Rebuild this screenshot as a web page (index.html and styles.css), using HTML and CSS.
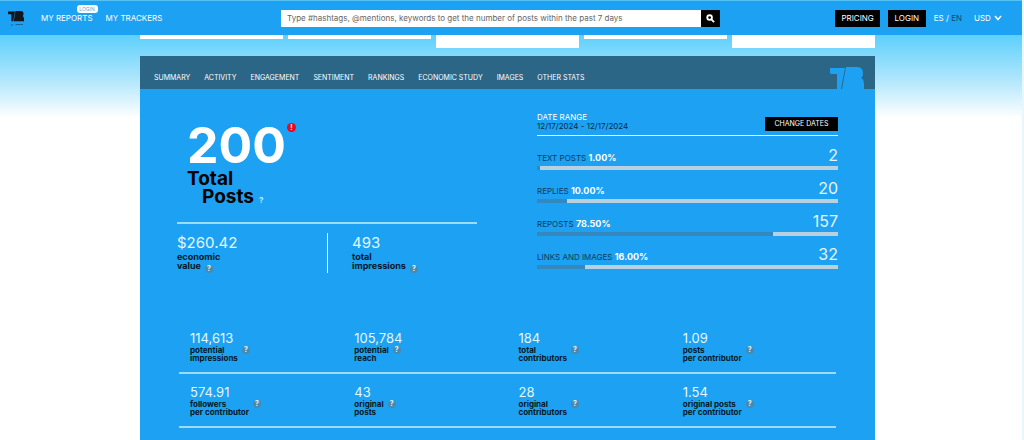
FILE: index.html
```html
<!DOCTYPE html>
<html lang="en">
<head>
<meta charset="utf-8">
<meta name="viewport" content="width=device-width, initial-scale=1">
<title>Report summary</title>
<link rel="stylesheet" href="styles.css">
</head>
<body>
<svg class="defs" aria-hidden="true">
  <symbol id="tb" viewBox="0 0 34 22">
    <path d="M0 1H15L11 22H7V7H1Q0 7 0 5ZM16 0H27Q33 0 33 6Q33 10 31 11Q34 12 34 17Q34 22 34 22H12Z"/>
  </symbol>
</svg>
<header class="topbar">
  <a class="logo" href="#" aria-label="Home"><svg viewBox="0 0 34 34"><use href="#tb" width="34" height="26"/><path d="M16 30H32V32H16ZM6 31H11V33H6Z" opacity=".4"/></svg></a>
  <nav class="main-nav">
    <a class="reports" href="#">MY REPORTS<span class="tag">LOGIN</span></a>
    <a href="#">MY TRACKERS</a>
  </nav>
  <form class="search">
    <input type="text" aria-label="Search posts" placeholder="Type #hashtags, @mentions, keywords to get the number of posts within the past 7 days">
    <button type="button" aria-label="Search"><svg viewBox="0 0 10 10"><circle cx="4" cy="4" r="2.6"/><path d="M6 6L9 9"/></svg></button>
  </form>
  <div class="account">
    <button type="button">PRICING</button>
    <button type="button">LOGIN</button>
    <div class="lang"><a href="#">ES</a> / <a class="current" href="#">EN</a></div>
    <div class="currency">
      <select aria-label="Currency"><option>USD</option></select>
      <svg viewBox="0 0 8 6"><path d="M1 1L4 4.500L7 1"/></svg>
    </div>
  </div>
</header>
<main class="page">
  <div class="cards"><div></div><div></div><div class="tall"></div><div></div><div class="tall"></div></div>
  <section class="report">
    <nav class="tabs">
      <a href="#">SUMMARY</a><a href="#">ACTIVITY</a><a href="#">ENGAGEMENT</a><a href="#">SENTIMENT</a><a href="#">RANKINGS</a><a href="#">ECONOMIC STUDY</a><a href="#">IMAGES</a><a href="#">OTHER STATS</a>
      <svg class="mark" aria-hidden="true"><use href="#tb"/></svg>
    </nav>
    <div class="overview">
      <div class="left">
        <div class="total">
          <div class="count">200<span class="alert">!</span></div>
          <h1>Total<span class="second">Posts<button type="button" class="hint" aria-label="About total posts">?</button></span></h1>
        </div>
        <div class="pair">
          <div class="metric"><div class="value">$260.42</div><div class="name">economic<br>value <button type="button" class="help" aria-label="About economic value">?</button></div></div>
          <div class="metric split"><div class="value">493</div><div class="name">total<br>impressions <button type="button" class="help" aria-label="About total impressions">?</button></div></div>
        </div>
      </div>
      <div class="right">
        <div class="range">
          <div><div class="range-title">DATE RANGE</div><div class="dates">12/17/2024 - 12/17/2024</div></div>
          <button type="button">CHANGE DATES</button>
        </div>
        <div class="shares">
          <div class="share"><div class="row"><span>TEXT POSTS <b>1.00%</b></span><strong>2</strong></div><div class="bar"><div style="width:1%"></div></div></div>
          <div class="share"><div class="row"><span>REPLIES <b>10.00%</b></span><strong>20</strong></div><div class="bar"><div style="width:10%"></div></div></div>
          <div class="share"><div class="row"><span>REPOSTS <b>78.50%</b></span><strong>157</strong></div><div class="bar"><div style="width:78.5%"></div></div></div>
          <div class="share"><div class="row"><span>LINKS AND IMAGES <b>16.00%</b></span><strong>32</strong></div><div class="bar"><div style="width:16%"></div></div></div>
        </div>
      </div>
    </div>
    <div class="stats">
      <div class="stat-row">
        <div><div class="num">114,613</div><div class="label"><span>potential<br>impressions</span><button type="button" class="help" aria-label="About potential impressions">?</button></div></div>
        <div><div class="num">105,784</div><div class="label"><span>potential<br>reach</span><button type="button" class="help" aria-label="About potential reach">?</button></div></div>
        <div><div class="num">184</div><div class="label"><span>total<br>contributors</span><button type="button" class="help" aria-label="About total contributors">?</button></div></div>
        <div><div class="num">1.09</div><div class="label"><span>posts<br>per contributor</span><button type="button" class="help" aria-label="About posts per contributor">?</button></div></div>
      </div>
      <div class="stat-row">
        <div><div class="num">574.91</div><div class="label"><span>followers<br>per contributor</span><button type="button" class="help" aria-label="About followers per contributor">?</button></div></div>
        <div><div class="num">43</div><div class="label"><span>original<br>posts</span><button type="button" class="help" aria-label="About original posts">?</button></div></div>
        <div><div class="num">28</div><div class="label"><span>original<br>contributors</span><button type="button" class="help" aria-label="About original contributors">?</button></div></div>
        <div><div class="num">1.54</div><div class="label"><span>original posts<br>per contributor</span><button type="button" class="help" aria-label="About original posts per contributor">?</button></div></div>
      </div>
    </div>
  </section>
</main>
</body>
</html>
```
FILE: styles.css
```css
* { box-sizing: border-box; }
body {
  margin: 0;
  font-family: Inter, "Liberation Sans", sans-serif;
  font-size: 8px;
  line-height: 10px;
  color: #fff;
  background: #fff linear-gradient(#54c9fb 0, #5fd0fb 36px, #a9e4fc 76px, #fff 118px) no-repeat;
  border-right: 2px solid #e8f6fd;
}
a { color: inherit; text-decoration: none; }
button, input, select { font: inherit; color: inherit; border: 0; border-radius: 0; margin: 0; padding: 0; }
button { background: #000; cursor: pointer; }
svg { display: block; }
.defs { position: absolute; width: 0; height: 0; }

.topbar {
  display: flex;
  align-items: center;
  height: 35px;
  padding: 0 20px 0 8px;
  background: #1da1f2;
  border-top: 1px solid #54c3f3;
}
.logo { width: 16px; margin-right: 17px; fill: #10171d; }
.main-nav { display: flex; gap: 13px; width: 240px; }
.reports { position: relative; }
.tag {
  position: absolute;
  right: -5px;
  top: -8px;
  width: 21px;
  border-radius: 3px;
  background: #fff;
  color: #6b9fc0;
  font-size: 5px;
  line-height: 8px;
  text-align: center;
}
.search { display: flex; flex: 1; height: 17px; }
.search input { flex: 1; min-width: 0; padding: 0 6px; background: #fff; color: #555; }
.search input::placeholder { color: #666; opacity: 1; }
.search button { width: 19px; padding: 4px 5px; }
.search svg { width: 9px; fill: none; stroke: #fff; stroke-width: 2; }
.account { display: flex; align-items: center; margin-left: 115px; }
.account button { height: 17px; padding: 0 6px; margin-right: 8px; min-width: 38px; }
.lang { margin-right: 12px; }
.current { color: #16486b; }
.currency { display: flex; align-items: center; gap: 3px; }
.currency select { appearance: none; background: none; }
.currency svg { width: 8px; fill: none; stroke: #fff; stroke-width: 1.5; }

.page { margin: 0 147px 0 140px; }
.cards { display: grid; grid-template-columns: repeat(5, 1fr); gap: 5px; height: 21px; align-items: start; }
.cards div { height: 4px; background: #fff; }
.cards .tall { height: 13px; }
.report { background: #1da1f2; min-height: 384px; }
.tabs { display: flex; gap: 14px; height: 33px; padding: 16px 11px 0 14px; font-size: 7px; background: #2c6686; }
.tabs a { padding-top: 1px; }
.mark { width: 34px; height: 22px; margin: -5px 0 0 auto; fill: #1da1f2; }

.overview { display: grid; grid-template-columns: 300fr 301fr; gap: 60px; padding: 22px 37px 0; }
.total { padding: 10px 0 0 10px; height: 111px; }
.count { position: relative; width: fit-content; font-size: 50px; line-height: 49px; font-weight: 700; }
.alert {
  position: absolute;
  top: 2px;
  right: -10px;
  width: 9px;
  height: 9px;
  border-radius: 50%;
  background: #e30b20;
  font-size: 7px;
  line-height: 9px;
  text-align: center;
}
h1 { margin: 0; font-size: 19px; line-height: 18px; font-weight: 700; color: #000; }
.second { display: block; padding-left: 15px; }
.hint { margin-left: 5px; background: none; color: #c4ecff; font-size: 8px; line-height: 8px; }
.pair { display: grid; grid-template-columns: 1fr 1fr; border-top: 2px solid #9edcff; padding-top: 9px; }
.metric { height: 40px; }
.split { border-left: 1px solid #fff; padding-left: 24px; }
.value { font-size: 15px; line-height: 19px; color: #e4f7ff; }
.name { font-size: 9px; line-height: 9px; font-weight: 700; color: #001626; }
.help {
  width: 8px;
  height: 8px;
  border-radius: 50%;
  background: #4b89ad;
  color: #e8f7ff;
  font-size: 7px;
  line-height: 8px;
  font-weight: 700;
  text-align: center;
}
.name .help { margin-left: 2px; vertical-align: -2px; }

.range { display: flex; justify-content: space-between; align-items: flex-end; height: 25px; padding-bottom: 4px; border-bottom: 1px solid #fff; }
.range-title { line-height: 10px; }
.dates { line-height: 9px; color: #082c48; }
.range button { width: 73px; height: 14px; font-size: 7px; }
.shares { display: grid; gap: 10px; padding-top: 11px; }
.row { display: flex; justify-content: space-between; align-items: flex-end; height: 19px; padding-bottom: 3px; color: #0b3c60; }
.row b { color: #fff; font-size: 9px; }
.row strong { color: #e4f7ff; font-size: 16px; font-weight: 400; line-height: 16px; }
.bar { height: 4px; background: #b9d0df; }
.bar div { height: 4px; background: #3588bd; }

.stats { padding: 47px 39px 0; }
.stat-row { display: grid; grid-template-columns: repeat(4, 1fr); height: 54px; padding-top: 11px; border-bottom: 2px solid #9edcff; }
.stat-row > div { padding-left: 11px; }
.num { font-size: 13px; line-height: 15px; color: #e4f7ff; }
.label { display: flex; align-items: flex-start; gap: 4px; line-height: 8px; font-weight: 700; color: #001626; }
```
